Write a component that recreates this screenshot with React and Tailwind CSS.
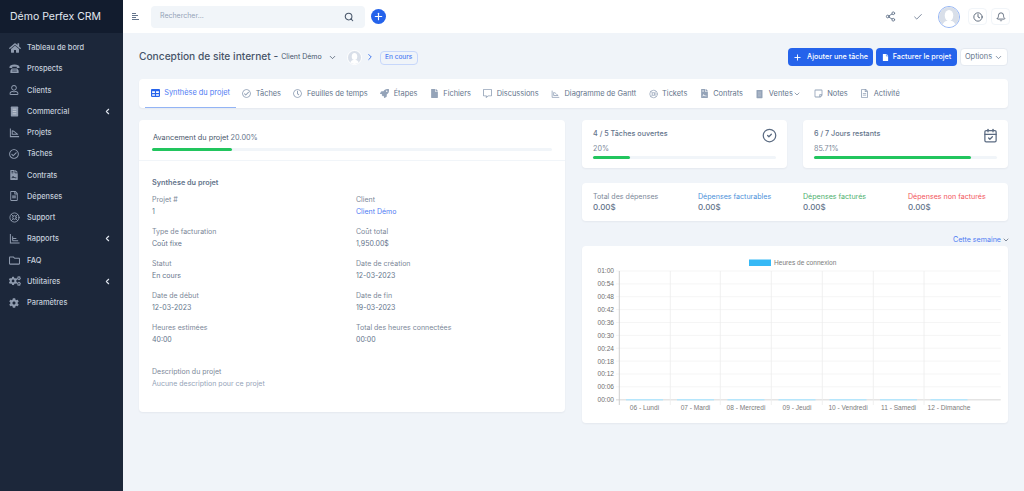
import { Plus, Search, Check, ChevronDown, ChevronLeft, ChevronRight, Share2, Clock, Bell, CircleCheck, CalendarCheck, LifeBuoy } from "lucide-react";
import { FaHome, FaRegUser, FaFileContract, FaRegFileAlt, FaRegFolder, FaCogs, FaCog, FaTable, FaRocket, FaFile, FaRegCommentAlt, FaRegStickyNote, FaRegClock, FaRegCheckCircle } from "react-icons/fa";

function AreaIcon({ size = 11 }) {
  return (
    <svg width={size} height={size} viewBox="0 0 24 24" fill="none" stroke="currentColor" strokeWidth="2.2">
      <path d="M3 3v18h19" />
      <path d="M7 16V8c4 0 6 3 8 5l4 3z" strokeLinejoin="round" />
    </svg>
  );
}

function ReportIcon({ size = 11 }) {
  return (
    <svg width={size} height={size} viewBox="0 0 24 24" fill="none" stroke="currentColor" strokeWidth="2.2">
      <path d="M3 2v20h20" />
      <path d="M8 17h12M8 12h8M8 7V17" />
    </svg>
  );
}

function PhoneIcon({ size = 11 }) {
  return (
    <svg width={size} height={size} viewBox="0 0 24 24" fill="currentColor">
      <path d="M1 9c0-4 5-6 11-6s11 2 11 6v2h-6V8H7v3H1z" />
      <path d="M6 12h12l3 5v5H3v-5z" />
      <path d="M7 15h10M7 18h10" stroke="#1c273a" strokeWidth="1.2" />
    </svg>
  );
}

function LedgerIcon({ size = 11 }) {
  return (
    <svg width={size} height={size} viewBox="0 0 24 24">
      <rect x="4" y="1" width="16" height="22" rx="1.5" fill="currentColor" />
      <path d="M8 7h8M8 12h8M8 17h8" stroke="#ffffff" strokeOpacity="0.55" strokeWidth="1.6" />
    </svg>
  );
}

function UserAvatar({ className }) {
  return (
    <svg className={className} viewBox="0 0 40 40">
      <rect width="40" height="40" fill="#d9dfe9" />
      <ellipse cx="20" cy="17" rx="8.5" ry="11" fill="#fff" />
      <path d="M6 40c1-9 7-13 14-13s13 4 14 13z" fill="#fff" />
    </svg>
  );
}

const NAV = [
  { label: "Tableau de bord", icon: <FaHome size={12} /> },
  { label: "Prospects", icon: <PhoneIcon /> },
  { label: "Clients", icon: <FaRegUser size={10} /> },
  { label: "Commercial", icon: <LedgerIcon /> },
  { label: "Projets", icon: <AreaIcon /> },
  { label: "Tâches", icon: <FaRegCheckCircle size={10} /> },
  { label: "Contrats", icon: <FaFileContract size={10} /> },
  { label: "Dépenses", icon: <FaRegFileAlt size={10} /> },
  { label: "Support", icon: <LifeBuoy size={11} /> },
  { label: "Rapports", icon: <ReportIcon /> },
  { label: "FAQ", icon: <FaRegFolder size={11} /> },
  { label: "Utilitaires", icon: <FaCogs size={12} /> },
  { label: "Paramètres", icon: <FaCog size={10} /> },
];
const WITH_ARROW = ["Commercial", "Rapports", "Utilitaires"];

const TABS = [
  { label: "Synthèse du projet", icon: <FaTable size={10} />, active: true },
  { label: "Tâches", icon: <FaRegCheckCircle size={9} /> },
  { label: "Feuilles de temps", icon: <FaRegClock size={9} /> },
  { label: "Étapes", icon: <FaRocket size={9} /> },
  { label: "Fichiers", icon: <FaFile size={9} /> },
  { label: "Discussions", icon: <FaRegCommentAlt size={9} /> },
  { label: "Diagramme de Gantt", icon: <AreaIcon size={10} /> },
  { label: "Tickets", icon: <LifeBuoy size={10} /> },
  { label: "Contrats", icon: <FaFileContract size={9} /> },
  { label: "Ventes", icon: <LedgerIcon size={10} />, caret: true },
  { label: "Notes", icon: <FaRegStickyNote size={9} /> },
  { label: "Activité", icon: <FaRegFileAlt size={9} /> },
];

const DETAILS = [
  ["Projet #", "1", "Client", "Client Démo"],
  ["Type de facturation", "Coût fixe", "Coût total", "1,950.00$"],
  ["Statut", "En cours", "Date de création", "12-03-2023"],
  ["Date de début", "12-03-2023", "Date de fin", "19-03-2023"],
  ["Heures estimées", "40:00", "Total des heures connectées", "00:00"],
];

const EXPENSES = [
  { label: "Total des dépenses", color: "text-[#7b8798]" },
  { label: "Dépenses facturables", color: "text-[#4a90d9]" },
  { label: "Dépenses facturés", color: "text-[#4caf6e]" },
  { label: "Dépenses non facturés", color: "text-[#f2545b]" },
];

function Bar({ value }) {
  return (
    <div className="h-[3px] w-full rounded-full bg-[#f1f5f9]">
      <div className="h-full rounded-full bg-[#22c55e]" style={{ width: value + "%" }} />
    </div>
  );
}

function StatCard({ title, pct, value, icon }) {
  return (
    <div className="relative h-[48px] flex-1 rounded bg-white px-[11px] pt-[8px] shadow-[0_1px_2px_rgba(15,23,42,0.05)]">
      <div className="text-[7.2px] leading-[11px] font-medium text-[#64748b]">{title}</div>
      <div className="mt-[4px] mb-[2px] text-[7.2px] leading-[11px] text-[#7b8798]">{pct}</div>
      <Bar value={value} />
      <div className="absolute top-[8px] right-[10px] text-[#5b6b82]">{icon}</div>
    </div>
  );
}

function Chart() {
  const ys = [271, 283.9, 296.7, 309.6, 322.5, 335.4, 348.2, 361.1, 374, 386.8, 399.7];
  const labels = ["01:00", "00:54", "00:48", "00:42", "00:36", "00:30", "00:24", "00:18", "00:12", "00:06", "00:00"];
  const xs = [670.3, 720.3, 771.3, 822.3, 873.3, 924];
  const days = [
    [644.5, "06 - Lundi"], [695.5, "07 - Mardi"], [746, "08 - Mercredi"], [797, "09 - Jeudi"],
    [848, "10 - Vendredi"], [898.5, "11 - Samedi"], [949, "12 - Dimanche"],
  ];
  // coordinates are page pixels, the viewBox starts at the card's corner
  return (
    <svg className="block" width="426" height="177" viewBox="582 246 426 177" fontFamily="'Liberation Sans', sans-serif">
      <rect x="749" y="259.5" width="22" height="6.5" fill="#36b9f6" />
      <text x="774" y="265" fontSize="6.6" fill="#7c7c7c">Heures de connexion</text>
      {ys.map((y, i) => (
        <g key={y}>
          <line x1="616" x2="1000.7" y1={y} y2={y} stroke={i === 10 ? "#e4e4e4" : "#f2f2f2"} strokeWidth={i === 10 ? 1.4 : 0.8} />
          <text x="614" y={y + 2.4} fontSize="6.6" fill="#6f6f6f" textAnchor="end">{labels[i]}</text>
        </g>
      ))}
      <line x1="619.3" x2="619.3" y1="271" y2="405" stroke="#c9c9c9" strokeWidth="0.9" />
      {xs.map((x) => (
        <line key={x} x1={x} x2={x} y1="271" y2="405" stroke="#ececec" strokeWidth="0.8" />
      ))}
      {days.map(([x, d]) => (
        <g key={d}>
          <rect x={x - 18.5} y="399" width="37" height="1.4" fill="#b5e6fc" />
          <text x={x} y="410" fontSize="6.6" fill="#7c7c7c" textAnchor="middle">{d}</text>
        </g>
      ))}
    </svg>
  );
}

export default function App() {
  return (
    <div className="flex h-[491px] w-[1024px] overflow-hidden bg-[#f0f4f9] font-['Inter',sans-serif] text-[7.2px] text-[#64748b]">
      {/* sidebar */}
      <aside className="flex w-[123px] shrink-0 flex-col bg-[#1c273a]">
        <div className="flex h-[33px] items-center bg-[#121c2e] pl-[10px] text-[10.5px] text-[#e2e8f0]">Démo Perfex CRM</div>
        <nav className="flex flex-col pt-[4px]">
          {NAV.map((item) => (
            <div key={item.label} className="flex h-[21.25px] items-center pl-[9px] pr-[11px] text-[7.4px] font-medium text-[#c5cedb]">
              <span className="flex w-[18px] shrink-0 text-[#8f9bae]">{item.icon}</span>
              <span className="flex-1">{item.label}</span>
              {WITH_ARROW.includes(item.label) && <ChevronLeft size={9} strokeWidth={3} className="text-[#e2e8f0]" />}
            </div>
          ))}
        </nav>
      </aside>

      <div className="flex min-w-0 flex-1 flex-col">
        {/* top bar */}
        <header className="flex h-[33px] shrink-0 items-center bg-white pl-[9px] pr-[14px]">
          <div className="flex w-[10px] flex-col gap-[1px]">
            <span className="h-[1px] w-[4px] bg-[#64748b]" />
            <span className="h-[1px] w-[6px] bg-[#64748b]" />
            <span className="h-[1px] w-[4px] bg-[#64748b]" />
            <span className="h-[1px] w-[7px] bg-[#64748b]" />
          </div>
          <div className="ml-[9px] flex h-[22px] w-[214px] items-center justify-between rounded bg-[#f1f5f9] pl-[9px] pr-[11px] text-[7px] text-[#94a3b8]">
            Rechercher...
            <Search size={10} strokeWidth={2.5} className="text-[#475569]" />
          </div>
          <div className="ml-[6px] flex h-[15px] w-[15px] items-center justify-center rounded-full bg-[#2563eb] text-white">
            <Plus size={11} strokeWidth={2.5} />
          </div>
          <div className="flex-1" />
          <Share2 size={11} className="text-[#64748b]" />
          <Check size={10} className="ml-[17px] text-[#64748b]" />
          <div className="ml-[15px] h-[22px] w-[22px] overflow-hidden rounded-full border border-[#93b4f5]">
            <UserAvatar className="h-full w-full" />
          </div>
          <div className="ml-[8px] flex h-[17px] w-[19px] items-center justify-center rounded border border-[#f1f5f9]">
            <Clock size={10} className="text-[#475569]" />
          </div>
          <div className="ml-[4px] flex h-[17px] w-[19px] items-center justify-center rounded border border-[#f1f5f9]">
            <Bell size={10} className="text-[#475569]" />
          </div>
        </header>

        <main className="flex flex-col pl-[16px] pr-[16px]">
          {/* title row */}
          <div className="flex h-[46px] items-center pt-[2px]">
            <span className="text-[10.2px] font-medium text-[#475569]">Conception de site internet -</span>
            <span className="ml-[3px] pt-[1px] text-[7px] text-[#475569]">Client Démo</span>
            <ChevronDown size={9} className="ml-[6px] text-[#475569]" />
            <div className="ml-[10px] h-[15px] w-[15px] overflow-hidden rounded-full border border-white">
              <UserAvatar className="h-full w-full" />
            </div>
            <ChevronRight size={10} className="ml-[3px] text-[#2563eb]" />
            <span className="mt-[1px] ml-[5px] flex h-[14px] w-[38px] items-center justify-center rounded border border-[#c7d7fb] text-[6.5px] font-medium text-[#4f7cf3]">En cours</span>
            <div className="flex-1" />
            <button className="flex h-[18px] w-[85px] items-center justify-center gap-[5px] rounded bg-[#2563eb] text-[7.2px] font-medium text-white">
              <Plus size={9} strokeWidth={2.5} />Ajouter une tâche
            </button>
            <button className="ml-[3px] flex h-[18px] w-[81px] items-center justify-center gap-[4px] rounded bg-[#2563eb] text-[7.2px] font-medium text-white">
              <FaFile size={7} />Facturer le projet
            </button>
            <button className="ml-[3px] flex h-[18px] w-[48px] items-center justify-center gap-[2px] rounded border border-[#e5eaf1] bg-white text-[7.4px] text-[#64748b]">
              Options<ChevronDown size={9} />
            </button>
          </div>

          {/* tabs */}
          <div className="flex h-[29px] items-stretch rounded bg-white pl-[5.5px] shadow-[0_1px_2px_rgba(15,23,42,0.05)]">
            {TABS.map((t) => (
              <div key={t.label} className={"flex items-center gap-[4.5px] px-[6.2px] text-[7.4px] " + (t.active ? "border-b border-[#93b4f5] text-[#4f7cf3]" : "text-[#64748b]")}>
                <span className={"flex w-[9px] justify-center " + (t.active ? "text-[#2563eb]" : "text-[#94a3b8]")}>{t.icon}</span>
                {t.label}
                {t.caret && <ChevronDown size={8} className="-ml-[4px]" />}
              </div>
            ))}
          </div>

          <div className="mt-[12px] flex gap-[17px]">
            {/* left card */}
            <section className="h-[292px] w-[426px] shrink-0 rounded bg-white shadow-[0_1px_2px_rgba(15,23,42,0.05)]">
              <div className="h-[41px] border-b border-[#f1f5f9] px-[13px] pt-[12px]">
                <div className="mb-[5px] pl-[1px] text-[7.3px] leading-[11px]">
                  <span className="text-[#475569]">Avancement du projet</span> 20.00%
                </div>
                <Bar value={20} />
              </div>
              <div className="px-[13px] pt-[16px]">
                <div className="mb-[6px] text-[7.3px] leading-[11px] font-semibold text-[#64748b]">Synthèse du projet</div>
                <div className="flex flex-col gap-[9px]">
                  {DETAILS.map((row) => (
                    <div key={row[0]} className="grid grid-cols-[204px_1fr]">
                      <div>
                        <div className="text-[7px] leading-[11px] text-[#7b8798]">{row[0]}</div>
                        <div className="mt-[1px] text-[7px] leading-[11px] text-[#64748b]">{row[1]}</div>
                      </div>
                      <div>
                        <div className="text-[7px] leading-[11px] text-[#7b8798]">{row[2]}</div>
                        <div className={"mt-[1px] text-[7px] leading-[11px] " + (row[3] === "Client Démo" ? "text-[#4f7cf3]" : "text-[#64748b]")}>{row[3]}</div>
                      </div>
                    </div>
                  ))}
                </div>
                <div className="mt-[21px] text-[7px] leading-[11px] text-[#7b8798]">Description du projet</div>
                <div className="mt-[1px] text-[7px] leading-[11px] text-[#94a3b8]">Aucune description pour ce projet</div>
              </div>
            </section>

            {/* right column */}
            <div className="flex w-[426px] shrink-0 flex-col">
              <div className="flex gap-[16px]">
                <StatCard title="4 / 5 Tâches ouvertes" pct="20%" value={20} icon={<CircleCheck size={15} />} />
                <StatCard title="6 / 7 Jours restants" pct="85.71%" value={85.71} icon={<CalendarCheck size={15} />} />
              </div>
              <div className="mt-[15px] grid h-[38px] grid-cols-[repeat(4,105px)] content-center rounded bg-white pl-[11px] shadow-[0_1px_2px_rgba(15,23,42,0.05)]">
                {EXPENSES.map((e) => (
                  <div key={e.label}>
                    <div className={"text-[7.1px] leading-[11px] " + e.color}>{e.label}</div>
                    <div className="text-[8px] leading-[11px] font-medium text-[#64748b]">0.00$</div>
                  </div>
                ))}
              </div>
              <div className="-mr-[2px] flex h-[25px] items-center justify-end gap-[1px] pt-[13px] text-[7.1px] text-[#4f7cf3]">
                Cette semaine<ChevronDown size={8} className="text-[#475569]" />
              </div>
              <div className="rounded bg-white shadow-[0_1px_2px_rgba(15,23,42,0.05)]">
                <Chart />
              </div>
            </div>
          </div>
        </main>
      </div>
    </div>
  );
}
